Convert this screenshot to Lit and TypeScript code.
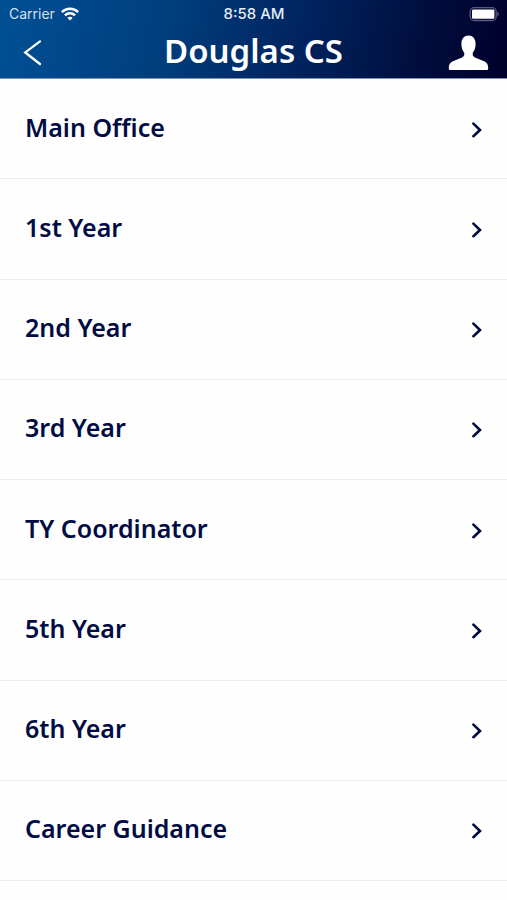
import { LitElement, html, css } from "lit";
import { customElement, property } from "lit/decorators.js";

@customElement("status-bar")
class StatusBar extends LitElement {
  static styles = css`
    :host {
      display: grid;
      grid-template-columns: 1fr auto 1fr;
      align-items: center;
      height: 28px;
      padding: 0 8px 0 9px;
      font-family: Inter, "Liberation Sans", sans-serif;
      font-size: 14px;
      line-height: 20px;
      color: #d5e0ee;
    }
    .carrier {
      display: flex;
      align-items: center;
      gap: 6px;
    }
    .time {
      font-size: 15px;
      font-weight: 500;
      color: #e4ecf6;
    }
    .battery {
      justify-self: end;
    }
    svg {
      display: block;
    }
  `;

  render() {
    return html`
      <span class="carrier">
        Carrier
        <svg width="18" height="14" viewBox="0 0 18 14" fill="none" stroke="#fff" stroke-width="2.4" aria-hidden="true">
          <path d="M0.9 5.1C5.4 0.6 12.6 0.6 17.1 5.1" />
          <path d="M3.9 8.3C6.8 5.5 11.2 5.5 14.1 8.3" />
          <path d="M9 13.6L6.3 10.8C7.8 9.4 10.2 9.4 11.7 10.8Z" fill="#fff" stroke="none" />
        </svg>
      </span>
      <span class="time">8:58 AM</span>
      <svg class="battery" width="30" height="15" viewBox="0 0 30 15" role="img" aria-label="Battery full">
        <rect x="1.2" y="0.7" width="26" height="12.8" rx="4" fill="none" stroke="#5a5a80" stroke-width="1.3" />
        <rect x="3" y="2.5" width="22.4" height="9.2" rx="1.2" fill="#fff" />
        <path d="M28.4 4.8Q30 5.6 30 7.1T28.4 9.4Z" fill="#5a5a80" />
      </svg>
    `;
  }
}

@customElement("contact-row")
class ContactRow extends LitElement {
  @property() label = "";

  static styles = css`
    :host {
      display: grid;
      border-bottom: 1px solid #ececee;
    }
    .row {
      display: flex;
      align-items: center;
      justify-content: space-between;
      padding: 0 24px 0 25px;
      border: 0;
      background: none;
      text-align: left;
      font-family: "Noto Sans", sans-serif;
      font-size: 25px;
      font-weight: 600;
      line-height: 32px;
      color: #020c44;
      cursor: pointer;
    }
    .label {
      padding-bottom: 4px;
    }
    .chevron {
      flex: none;
      margin-top: 2px;
    }
  `;

  render() {
    return html`
      <button class="row" type="button">
        <span class="label">${this.label}</span>
        <svg class="chevron" width="12" height="16" viewBox="0 0 12 16" fill="none" stroke="#020c44" stroke-width="2.6" stroke-linecap="round" stroke-linejoin="miter" aria-hidden="true">
          <path d="M2.4 1.6L9 8L2.4 14.2" />
        </svg>
      </button>
    `;
  }
}

@customElement("app-root")
class AppRoot extends LitElement {
  private contacts = [
    "Main Office",
    "1st Year",
    "2nd Year",
    "3rd Year",
    "TY Coordinator",
    "5th Year",
    "6th Year",
    "Career Guidance",
  ];

  static styles = css`
    :host {
      display: flex;
      flex-direction: column;
      min-height: 100vh;
      background: #fefefe;
    }
    .header {
      background: linear-gradient(102deg, #005095 0%, #003e7d 33%, #00215b 62%, #000d3c 83%, #00002a 100%);
      border-bottom: 1px solid #7f93b4;
    }
    .bar {
      display: grid;
      grid-template-columns: 1fr auto 1fr;
      align-items: center;
      height: 50px;
      padding: 0 18px;
    }
    .title {
      margin: 0;
      font-family: "Noto Sans", sans-serif;
      font-size: 33px;
      font-weight: 600;
      line-height: 40px;
      padding-bottom: 4px;
      color: #fff;
    }
    .icon {
      display: block;
      padding: 0;
      border: 0;
      background: none;
      cursor: pointer;
    }
    .icon svg {
      display: block;
    }
    .back {
      justify-self: start;
      padding-left: 5px;
    }
    .profile {
      justify-self: end;
    }
    .list {
      flex: 1;
      display: grid;
      grid-auto-rows: minmax(100px, 1fr);
      margin: 0;
      padding: 0 0 19px;
      list-style: none;
    }
    .item {
      display: grid;
    }
  `;

  render() {
    return html`
      <header class="header">
        <status-bar></status-bar>
        <div class="bar">
          <button class="icon back" type="button" aria-label="Back">
            <svg width="20" height="28" viewBox="0 0 20 28" fill="none" stroke="#fff" stroke-width="2.3" stroke-linecap="round">
              <path d="M17 2.4L2.2 13.4L17 25" />
            </svg>
          </button>
          <h1 class="title">Douglas CS</h1>
          <button class="icon profile" type="button" aria-label="Profile">
            <svg width="41" height="36" viewBox="0 0 41 36" fill="#fff">
              <path d="M20.5 0.5C24.8 0.5 27.6 3.8 27.6 8.8C27.6 12.6 26.6 15.6 24.9 17.6C24.3 19.8 24.9 21.5 27 22.4L35.5 26C39 27.5 40.2 29.6 40.2 33.2C40.2 34.5 39.8 35 38.6 35H2.4C1.2 35 0.8 34.5 0.8 33.2C0.8 29.6 2 27.5 5.5 26L14 22.4C16.1 21.5 16.7 19.8 16.1 17.6C14.4 15.6 13.4 12.6 13.4 8.8C13.4 3.8 16.2 0.5 20.5 0.5Z" />
            </svg>
          </button>
        </div>
      </header>
      <ul class="list">
        ${this.contacts.map(
          (name) => html`<li class="item"><contact-row label=${name}></contact-row></li>`
        )}
      </ul>
    `;
  }
}
